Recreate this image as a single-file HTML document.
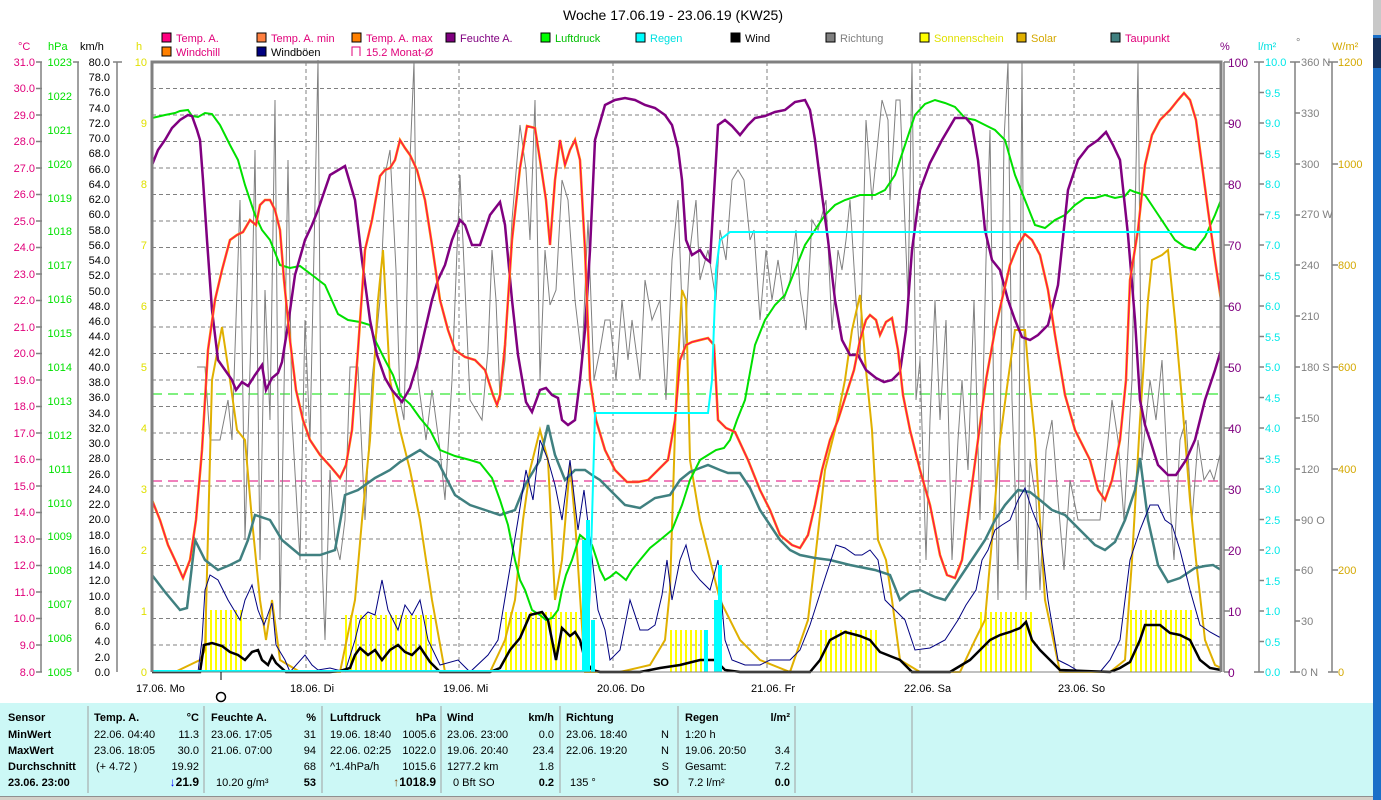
<!DOCTYPE html>
<html><head><meta charset="utf-8"><style>
html,body{margin:0;padding:0;background:#fff;width:1381px;height:800px;overflow:hidden}
svg{display:block;font-family:"Liberation Sans",sans-serif}
</style></head><body>
<svg width="1381" height="800" viewBox="0 0 1381 800" xmlns="http://www.w3.org/2000/svg">
<defs>
<pattern id="sun" width="5" height="10" patternUnits="userSpaceOnUse"><rect x="0" y="0" width="2" height="10" fill="#ffff00"/></pattern>
</defs>
<rect width="1381" height="800" fill="#fff"/>
<!-- right desktop strip -->
<rect x="1373" y="0" width="8" height="800" fill="#1a6fc8"/>
<rect x="1373" y="0" width="8" height="35" fill="#c8c8c8"/>
<rect x="1373" y="38" width="8" height="30" fill="#16305a"/>
<text x="673" y="20" font-size="14" text-anchor="middle" fill="#000">Woche 17.06.19 - 23.06.19 (KW25)</text>
<!-- legend -->
<g font-size="11">
<rect x="162" y="33" width="9" height="9" fill="#ff0080" stroke="#000"/><text x="176" y="42" fill="#e0007a">Temp. A.</text>
<rect x="257" y="33" width="9" height="9" fill="#ff8040" stroke="#000"/><text x="271" y="42" fill="#e0007a">Temp. A. min</text>
<rect x="352" y="33" width="9" height="9" fill="#ff8000" stroke="#000"/><text x="366" y="42" fill="#e0007a">Temp. A. max</text>
<rect x="446" y="33" width="9" height="9" fill="#800080" stroke="#000"/><text x="460" y="42" fill="#800080">Feuchte A.</text>
<rect x="541" y="33" width="9" height="9" fill="#00ff00" stroke="#000"/><text x="555" y="42" fill="#00c000">Luftdruck</text>
<rect x="636" y="33" width="9" height="9" fill="#00ffff" stroke="#000"/><text x="650" y="42" fill="#00e0e0">Regen</text>
<rect x="731" y="33" width="9" height="9" fill="#000" stroke="#000"/><text x="745" y="42" fill="#000">Wind</text>
<rect x="826" y="33" width="9" height="9" fill="#808080" stroke="#000"/><text x="840" y="42" fill="#808080">Richtung</text>
<rect x="920" y="33" width="9" height="9" fill="#ffff00" stroke="#000"/><text x="934" y="42" fill="#e0e000">Sonnenschein</text>
<rect x="1017" y="33" width="9" height="9" fill="#e0b000" stroke="#000"/><text x="1031" y="42" fill="#d4a800">Solar</text>
<rect x="1111" y="33" width="9" height="9" fill="#408080" stroke="#000"/><text x="1125" y="42" fill="#e0007a">Taupunkt</text>
<rect x="162" y="47" width="9" height="9" fill="#ff8000" stroke="#000"/><text x="176" y="56" fill="#e0007a">Windchill</text>
<rect x="257" y="47" width="9" height="9" fill="#000080" stroke="#000"/><text x="271" y="56" fill="#000">Windböen</text>
<path d="M352 56V47h8v9" fill="none" stroke="#e0007a"/><text x="366" y="56" fill="#e0007a">15.2 Monat-Ø</text>
</g>
<!-- axis headers -->
<g font-size="11">
<text x="18" y="50" fill="#e0007a">°C</text><text x="48" y="50" fill="#00e000">hPa</text><text x="80" y="50" fill="#000">km/h</text><text x="136" y="50" fill="#e0e000">h</text>
<text x="1220" y="50" fill="#800080">%</text><text x="1258" y="50" fill="#00e0e0">l/m²</text><text x="1296" y="46" fill="#808080">°</text><text x="1332" y="50" fill="#d4a800">W/m²</text>
</g>
<!-- grid -->
<g stroke="#808080" stroke-dasharray="4,3" stroke-width="1">
<path d="M152 88.5H1221M152 115H1221M152 141.5H1221M152 168H1221M152 194.5H1221M152 221H1221M152 247.5H1221M152 274H1221M152 300.5H1221M152 327H1221M152 353.5H1221M152 380H1221M152 406.5H1221M152 433H1221M152 459.5H1221M152 486H1221M152 512.5H1221M152 539H1221M152 565.5H1221M152 592H1221M152 618.5H1221M152 645H1221"/>
<path d="M306 62V672M459 62V672M613 62V672M767 62V672M920 62V672M1074 62V672"/>
</g>
<path d="M152 394H1221" stroke="#00e000" stroke-dasharray="10,6"/>
<path d="M152 481H1221" stroke="#e0007a" stroke-dasharray="10,6"/>
<!-- sunshine bars -->
<rect x="205" y="610" width="40" height="62" fill="url(#sun)"/>
<rect x="345" y="615" width="90" height="57" fill="url(#sun)"/>
<rect x="505" y="612" width="75" height="60" fill="url(#sun)"/>
<rect x="670" y="630" width="35" height="42" fill="url(#sun)"/>
<rect x="820" y="630" width="60" height="42" fill="url(#sun)"/>
<rect x="980" y="612" width="55" height="60" fill="url(#sun)"/>
<rect x="1130" y="610" width="62" height="62" fill="url(#sun)"/>
<!-- direction gray -->
<polyline fill="none" stroke="#808080" stroke-width="1" points="197,367 205,367 210,440 220,440 228,400 232,440 240,200 245,540 252,300 255,150 260,560 265,290 270,420 275,100 280,620 288,160 292,420 300,560 305,320 310,440 318,60 322,560 325,640 330,470 335,540 340,560 345,520 350,367 358,367 365,520 372,380 380,300 386,170 390,150 396,270 400,400 404,420 410,160 414,62 418,380 426,440 432,390 440,450 445,500 452,380 457,250 460,175 470,400 482,420 488,350 492,250 496,300 500,400 505,360 512,220 520,125 526,170 530,240 535,100 540,380 545,250 550,305 556,290 562,180 568,200 575,300 582,360 588,220 594,380 600,350 605,320 610,320 616,380 622,300 628,360 632,320 640,380 645,280 652,320 660,300 666,400 672,260 678,200 684,360 690,250 696,200 700,280 708,250 716,300 720,230 726,260 732,180 738,170 744,180 750,240 754,230 760,320 766,250 772,300 778,260 784,300 790,280 796,230 800,290 806,330 812,220 818,230 826,200 832,330 838,250 842,270 846,240 850,200 856,300 860,360 866,120 872,200 878,140 882,100 888,120 890,200 896,100 900,100 904,200 908,300 912,62 916,400 920,360 926,560 930,420 935,300 940,420 946,320 952,560 958,440 962,380 968,470 974,300 980,520 986,260 990,130 994,420 998,600 1004,140 1008,62 1012,400 1018,570 1022,62 1026,600 1030,460 1036,500 1040,590 1046,450 1052,420 1058,500 1064,570 1070,480 1078,520 1090,520 1100,520 1108,440 1112,400 1118,440 1124,520 1132,380 1138,62 1142,460 1150,380 1156,420 1162,360 1168,480 1174,560 1180,440 1186,420 1192,520 1198,440 1204,480 1210,470 1214,480 1221,450"/>
<!-- solar -->
<polyline fill="none" stroke="#e0b000" stroke-width="2" points="175,672 200,660 205,650 212,380 222,327 230,380 237,430 245,440 252,520 260,600 266,640 272,600 280,660 300,672 340,672 355,600 362,520 370,440 378,300 383,250 390,380 400,430 410,470 420,520 432,600 445,672 490,672 505,640 515,600 523,520 530,470 540,430 548,460 555,600 562,560 570,465 575,520 585,672 620,672 650,665 665,640 670,590 676,400 682,290 686,300 690,460 700,520 710,560 720,600 740,640 760,660 790,672 808,620 815,560 825,470 835,430 845,380 852,330 860,295 866,370 872,430 878,540 886,560 892,600 900,660 920,672 960,672 975,640 985,620 992,540 1000,440 1008,380 1015,330 1025,330 1030,390 1035,440 1040,520 1045,600 1060,672 1110,672 1125,660 1132,560 1140,420 1148,300 1152,260 1162,255 1168,250 1175,320 1182,400 1190,500 1196,560 1205,640 1215,665 1221,668"/>
<!-- dewpoint -->
<polyline fill="none" stroke="#408080" stroke-width="2.5" points="152,575 165,592 180,610 187,608 195,540 205,560 218,570 230,565 240,560 248,540 255,515 270,520 282,540 300,555 320,555 335,550 345,495 358,490 375,478 390,470 400,462 410,456 420,450 428,456 438,462 455,495 470,505 485,510 500,515 515,510 525,485 540,460 548,425 555,455 565,480 575,470 585,470 592,475 600,480 615,495 625,505 640,508 655,498 670,495 680,480 690,472 700,468 708,465 720,470 728,473 740,473 750,488 760,510 770,525 780,540 790,550 800,555 815,558 830,560 850,565 875,570 890,575 900,600 910,592 920,590 935,597 945,600 955,585 965,570 975,555 985,540 995,520 1005,505 1018,490 1030,492 1040,500 1052,510 1065,515 1080,530 1095,545 1105,550 1115,542 1125,520 1135,490 1140,458 1148,520 1158,565 1168,582 1180,578 1195,568 1205,566 1213,565 1221,570"/>
<!-- pressure -->
<polyline fill="none" stroke="#00e000" stroke-width="2" points="152,118 165,115 175,113 180,111 188,110 192,116 198,117 205,113 212,114 220,125 230,145 238,160 245,185 255,215 262,230 270,240 280,265 290,268 300,266 312,275 325,285 338,314 348,320 360,322 370,325 375,340 385,360 393,375 400,395 410,404 420,418 430,430 440,450 455,456 470,460 480,463 492,478 500,500 508,525 515,560 520,580 525,590 532,610 540,615 546,620 552,618 558,610 562,590 566,575 572,560 580,535 592,545 597,560 600,570 605,580 610,577 616,572 620,575 626,580 632,570 640,560 650,548 660,540 672,530 682,505 690,480 700,460 708,455 716,450 724,448 730,440 737,420 745,400 755,345 765,320 775,305 785,295 795,270 805,245 815,230 825,215 835,205 845,200 860,195 875,195 885,190 895,175 905,145 915,115 925,104 935,100 945,103 955,107 965,118 975,120 985,125 995,130 1005,140 1015,175 1025,200 1035,225 1045,228 1055,220 1065,215 1075,205 1085,198 1095,198 1105,195 1115,198 1125,196 1130,190 1135,192 1145,195 1155,210 1165,225 1175,240 1185,247 1195,250 1205,237 1215,215 1221,200"/>
<!-- humidity -->
<polyline fill="none" stroke="#800080" stroke-width="2.5" points="152,165 158,150 165,140 172,128 180,120 188,115 192,116 197,130 200,140 203,180 207,240 212,310 218,360 225,370 232,380 236,390 242,382 248,386 255,375 262,365 266,390 272,378 278,373 282,362 288,325 295,275 305,240 312,225 318,210 330,175 345,166 355,200 362,260 370,320 377,355 385,378 392,390 402,402 410,388 417,365 425,330 432,300 438,280 445,265 452,240 460,220 465,225 472,245 480,245 490,215 500,202 505,225 512,300 518,355 526,402 532,412 540,390 546,388 552,395 558,398 562,420 568,425 575,420 580,380 585,330 590,250 595,140 605,105 615,100 625,98 635,100 645,105 655,108 665,115 672,125 678,148 682,180 686,240 692,255 700,250 705,258 710,262 718,125 725,120 732,126 740,135 748,125 755,118 765,116 775,112 785,110 795,102 805,100 810,110 815,140 822,195 828,240 835,300 842,340 850,355 858,355 866,370 876,378 884,382 892,380 900,372 906,330 912,250 920,190 930,163 942,140 955,118 966,118 972,125 978,160 985,230 992,260 1000,270 1008,300 1015,320 1022,337 1030,340 1038,335 1048,325 1058,285 1068,190 1078,160 1088,147 1098,140 1106,132 1113,145 1120,160 1128,235 1135,320 1140,400 1145,425 1150,440 1158,465 1168,475 1176,475 1186,460 1195,440 1205,400 1215,370 1221,350"/>
<!-- temperature (orange under, red over) -->
<polyline fill="none" stroke="#ff8000" stroke-width="2.5" points="152,500 160,520 168,545 175,560 183,578 190,560 196,520 202,450 208,350 215,300 222,270 230,240 237,235 243,232 250,220 256,225 260,205 265,200 270,200 275,210 280,230 284,280 290,340 296,390 303,420 310,440 320,455 330,466 340,478 346,465 352,430 358,350 365,250 372,220 380,176 385,170 390,168 395,160 400,140 405,148 410,155 417,170 425,200 432,245 440,300 448,330 455,350 465,357 475,360 485,370 493,395 497,405 500,395 505,345 512,240 520,168 527,126 535,128 540,160 546,200 550,245 555,180 560,140 565,165 570,150 575,140 580,160 585,250 590,380 596,420 605,450 615,470 627,482 638,482 648,480 658,470 668,460 675,420 680,360 686,345 692,342 700,340 708,338 714,345 718,420 726,428 735,432 748,460 760,490 770,510 780,535 792,545 800,548 808,535 815,505 822,470 830,440 838,420 846,395 854,370 860,340 866,320 870,315 876,320 880,335 886,322 892,318 898,350 903,395 910,430 920,470 930,505 940,555 947,575 955,578 962,560 970,500 978,440 986,380 995,330 1003,295 1010,265 1018,245 1025,234 1032,240 1040,255 1048,290 1055,335 1065,395 1075,430 1090,460 1098,490 1105,500 1112,480 1120,440 1126,380 1130,280 1138,230 1145,165 1152,135 1160,120 1170,110 1178,100 1184,93 1190,100 1196,120 1202,165 1208,210 1215,260 1221,300"/>
<polyline fill="none" stroke="#ff0060" stroke-width="1" points="152,500 160,520 168,545 175,560 183,578 190,560 196,520 202,450 208,350 215,300 222,270 230,240 237,235 243,232 250,220 256,225 260,205 265,200 270,200 275,210 280,230 284,280 290,340 296,390 303,420 310,440 320,455 330,466 340,478 346,465 352,430 358,350 365,250 372,220 380,176 385,170 390,168 395,160 400,140 405,148 410,155 417,170 425,200 432,245 440,300 448,330 455,350 465,357 475,360 485,370 493,395 497,405 500,395 505,345 512,240 520,168 527,126 535,128 540,160 546,200 550,245 555,180 560,140 565,165 570,150 575,140 580,160 585,250 590,380 596,420 605,450 615,470 627,482 638,482 648,480 658,470 668,460 675,420 680,360 686,345 692,342 700,340 708,338 714,345 718,420 726,428 735,432 748,460 760,490 770,510 780,535 792,545 800,548 808,535 815,505 822,470 830,440 838,420 846,395 854,370 860,340 866,320 870,315 876,320 880,335 886,322 892,318 898,350 903,395 910,430 920,470 930,505 940,555 947,575 955,578 962,560 970,500 978,440 986,380 995,330 1003,295 1010,265 1018,245 1025,234 1032,240 1040,255 1048,290 1055,335 1065,395 1075,430 1090,460 1098,490 1105,500 1112,480 1120,440 1126,380 1130,280 1138,230 1145,165 1152,135 1160,120 1170,110 1178,100 1184,93 1190,100 1196,120 1202,165 1208,210 1215,260 1221,300"/>
<!-- gusts -->
<polyline fill="none" stroke="#000080" stroke-width="1" points="198,672 202,640 205,590 210,575 218,580 228,600 240,620 245,600 252,585 258,610 264,625 272,603 276,645 285,660 290,672 305,655 312,665 318,670 330,668 345,672 355,640 360,620 368,612 375,615 382,580 388,610 393,620 398,630 405,605 412,615 420,600 428,640 440,665 458,660 470,672 488,655 498,640 508,580 518,520 526,470 533,500 540,440 548,460 555,485 562,520 570,460 578,530 584,490 590,540 598,610 605,630 610,660 620,650 630,600 640,630 648,630 655,625 662,595 667,560 672,600 680,560 686,545 692,570 700,580 710,590 718,560 725,640 732,660 745,665 760,665 770,660 780,660 790,660 800,650 810,625 818,600 826,575 836,545 845,548 855,555 862,555 870,550 878,560 885,600 895,610 905,620 915,650 930,648 945,640 958,620 966,605 976,590 982,560 988,550 995,530 1002,525 1010,520 1018,500 1025,488 1032,510 1040,530 1048,600 1058,660 1068,665 1080,672 1100,672 1110,660 1120,640 1130,560 1140,530 1150,505 1158,505 1165,520 1172,525 1180,550 1190,590 1200,625 1210,632 1221,638"/>
<!-- wind -->
<polyline fill="none" stroke="#000" stroke-width="2.5" points="152,672 200,672 204,645 212,643 222,646 230,652 238,655 245,660 252,652 258,650 262,660 268,665 272,656 276,663 286,672 330,672 340,671 350,668 355,655 360,648 368,655 375,650 382,660 390,650 398,645 405,652 412,655 420,647 430,662 440,672 490,672 500,668 510,650 520,638 530,615 542,612 548,620 552,640 556,660 562,628 570,636 575,632 580,640 585,660 592,670 600,672 640,672 660,668 680,665 700,660 715,660 725,670 740,672 810,672 820,660 830,640 845,632 860,636 870,640 880,652 890,656 900,660 912,672 950,672 960,666 970,660 980,650 990,640 1000,635 1010,632 1020,628 1026,622 1032,640 1040,650 1050,660 1060,670 1110,672 1120,668 1130,662 1140,640 1145,625 1160,625 1170,633 1180,635 1190,640 1200,660 1210,668 1221,670"/>
<!-- rain -->
<polyline fill="none" stroke="#00ffff" stroke-width="2" points="152,671 585,671 590,590 595,413 708,413 712,380 716,270 720,240 730,232 1221,232"/>
<g stroke="#00ffff" stroke-width="4"><path d="M584 672V540M588 672V520M593 672V620M716 672V600M720 672V565M706 672V630"/></g>
<!-- borders -->
<path d="M152 672V62H1221V672" fill="none" stroke="#808080" stroke-width="3"/>
<path d="M152 672H1221" stroke="#808080" stroke-width="1"/>
<!-- axis lines -->
<g stroke="#808080" stroke-width="1.5" fill="none">
<path d="M41 62V672M36 62H42M78 62V672M73 62H79M117 62V672M113 62H122M1224 62V672M1224 62H1230M1259 62V672M1254 62H1264M1295 62V672M1290 62H1300M1332 62V672M1328 62H1338"/>
<path d="M36 88.5H42M36 115H42M36 141.5H42M36 168H42M36 194.5H42M36 221H42M36 247.5H42M36 274H42M36 300.5H42M36 327H42M36 353.5H42M36 380H42M36 406.5H42M36 433H42M36 459.5H42M36 486H42M36 512.5H42M36 539H42M36 565.5H42M36 592H42M36 618.5H42M36 645H42M36 672H42"/>
<path d="M1224 123H1230M1224 184H1230M1224 245H1230M1224 306H1230M1224 367H1230M1224 428H1230M1224 489H1230M1224 550H1230M1224 611H1230M1224 672H1230"/>
<path d="M1259 92.5H1264M1259 123H1264M1259 153.5H1264M1259 184H1264M1259 214.5H1264M1259 245H1264M1259 275.5H1264M1259 306H1264M1259 336.5H1264M1259 367H1264M1259 397.5H1264M1259 428H1264M1259 458.5H1264M1259 489H1264M1259 519.5H1264M1259 550H1264M1259 580.5H1264M1259 611H1264M1259 641.5H1264M1254 672H1264"/>
<path d="M1295 113H1300M1295 164H1300M1295 215H1300M1295 265H1300M1295 316H1300M1295 367H1300M1295 418H1300M1295 469H1300M1295 520H1300M1295 570H1300M1295 621H1300M1290 672H1300"/>
<path d="M1332 164H1338M1332 265H1338M1332 367H1338M1332 469H1338M1332 570H1338M1328 672H1338"/>
</g>
<!-- left labels -->
<g font-size="11" fill="#e0007a" text-anchor="end">
<text x="35" y="66">31.0</text><text x="35" y="92">30.0</text><text x="35" y="119">29.0</text><text x="35" y="145">28.0</text><text x="35" y="172">27.0</text><text x="35" y="198">26.0</text><text x="35" y="225">25.0</text><text x="35" y="251">24.0</text><text x="35" y="278">23.0</text><text x="35" y="304">22.0</text><text x="35" y="331">21.0</text><text x="35" y="357">20.0</text><text x="35" y="384">19.0</text><text x="35" y="410">18.0</text><text x="35" y="437">17.0</text><text x="35" y="463">16.0</text><text x="35" y="490">15.0</text><text x="35" y="516">14.0</text><text x="35" y="543">13.0</text><text x="35" y="569">12.0</text><text x="35" y="596">11.0</text><text x="35" y="622">10.0</text><text x="35" y="649">9.0</text><text x="35" y="676">8.0</text>
</g>
<g font-size="11" fill="#00e000" text-anchor="end">
<text x="72" y="66">1023</text><text x="72" y="100">1022</text><text x="72" y="134">1021</text><text x="72" y="168">1020</text><text x="72" y="202">1019</text><text x="72" y="235">1018</text><text x="72" y="269">1017</text><text x="72" y="303">1016</text><text x="72" y="337">1015</text><text x="72" y="371">1014</text><text x="72" y="405">1013</text><text x="72" y="439">1012</text><text x="72" y="473">1011</text><text x="72" y="507">1010</text><text x="72" y="540">1009</text><text x="72" y="574">1008</text><text x="72" y="608">1007</text><text x="72" y="642">1006</text><text x="72" y="676">1005</text>
</g>
<g font-size="11" fill="#000" text-anchor="end">
<text x="110" y="66">80.0</text><text x="110" y="81">78.0</text><text x="110" y="96">76.0</text><text x="110" y="112">74.0</text><text x="110" y="127">72.0</text><text x="110" y="142">70.0</text><text x="110" y="157">68.0</text><text x="110" y="173">66.0</text><text x="110" y="188">64.0</text><text x="110" y="203">62.0</text><text x="110" y="218">60.0</text><text x="110" y="234">58.0</text><text x="110" y="249">56.0</text><text x="110" y="264">54.0</text><text x="110" y="279">52.0</text><text x="110" y="295">50.0</text><text x="110" y="310">48.0</text><text x="110" y="325">46.0</text><text x="110" y="340">44.0</text><text x="110" y="356">42.0</text><text x="110" y="371">40.0</text><text x="110" y="386">38.0</text><text x="110" y="401">36.0</text><text x="110" y="417">34.0</text><text x="110" y="432">32.0</text><text x="110" y="447">30.0</text><text x="110" y="462">28.0</text><text x="110" y="478">26.0</text><text x="110" y="493">24.0</text><text x="110" y="508">22.0</text><text x="110" y="523">20.0</text><text x="110" y="539">18.0</text><text x="110" y="554">16.0</text><text x="110" y="569">14.0</text><text x="110" y="584">12.0</text><text x="110" y="600">10.0</text><text x="110" y="615">8.0</text><text x="110" y="630">6.0</text><text x="110" y="645">4.0</text><text x="110" y="661">2.0</text><text x="110" y="676">0.0</text>
</g>
<g font-size="11" fill="#e0e000" text-anchor="end">
<text x="147" y="66">10</text><text x="147" y="127">9</text><text x="147" y="188">8</text><text x="147" y="249">7</text><text x="147" y="310">6</text><text x="147" y="371">5</text><text x="147" y="432">4</text><text x="147" y="493">3</text><text x="147" y="554">2</text><text x="147" y="615">1</text><text x="147" y="676">0</text>
</g>
<!-- right labels -->
<g font-size="12" fill="#800080">
<text x="1228" y="67">100</text><text x="1228" y="128">90</text><text x="1228" y="189">80</text><text x="1228" y="250">70</text><text x="1228" y="311">60</text><text x="1228" y="372">50</text><text x="1228" y="433">40</text><text x="1228" y="494">30</text><text x="1228" y="555">20</text><text x="1228" y="616">10</text><text x="1228" y="677">0</text>
</g>
<g font-size="11" fill="#00e8e8">
<text x="1265" y="66">10.0</text><text x="1265" y="97">9.5</text><text x="1265" y="127">9.0</text><text x="1265" y="158">8.5</text><text x="1265" y="188">8.0</text><text x="1265" y="219">7.5</text><text x="1265" y="249">7.0</text><text x="1265" y="280">6.5</text><text x="1265" y="310">6.0</text><text x="1265" y="341">5.5</text><text x="1265" y="371">5.0</text><text x="1265" y="402">4.5</text><text x="1265" y="432">4.0</text><text x="1265" y="463">3.5</text><text x="1265" y="493">3.0</text><text x="1265" y="524">2.5</text><text x="1265" y="554">2.0</text><text x="1265" y="585">1.5</text><text x="1265" y="615">1.0</text><text x="1265" y="646">0.5</text><text x="1265" y="676">0.0</text>
</g>
<g font-size="11" fill="#808080">
<text x="1301" y="66">360 N</text><text x="1301" y="117">330</text><text x="1301" y="168">300</text><text x="1301" y="218">270 W</text><text x="1301" y="269">240</text><text x="1301" y="320">210</text><text x="1301" y="371">180 S</text><text x="1301" y="422">150</text><text x="1301" y="473">120</text><text x="1301" y="524">90  O</text><text x="1301" y="574">60</text><text x="1301" y="625">30</text><text x="1301" y="676">0   N</text>
</g>
<g font-size="11" fill="#d4a800">
<text x="1338" y="66">1200</text><text x="1338" y="168">1000</text><text x="1338" y="269">800</text><text x="1338" y="371">600</text><text x="1338" y="473">400</text><text x="1338" y="574">200</text><text x="1338" y="676">0</text>
</g>
<!-- x labels -->
<g font-size="11" fill="#000">
<path d="M221 672V680" stroke="#000"/>
<text x="136" y="692">17.06.  Mo</text><text x="290" y="692">18.06.  Di</text><text x="443" y="692">19.06.  Mi</text><text x="597" y="692">20.06.  Do</text><text x="751" y="692">21.06.  Fr</text><text x="904" y="692">22.06.  Sa</text><text x="1058" y="692">23.06.  So</text>
</g>
<circle cx="221" cy="697" r="4.5" fill="none" stroke="#000" stroke-width="1.5"/>
<!-- table -->
<rect x="0" y="703" width="1373" height="93" fill="#ccf8f6"/>
<rect x="0" y="796" width="1373" height="4" fill="#d4d0c8"/>
<path d="M0 796.5H1373" stroke="#909090"/>
<g stroke="#a0a0a0"><path d="M88 706V793M204 706V793M322 706V793M441 706V793M560 706V793M678 706V793M795 706V793M912 706V793"/></g>
<g font-size="11" fill="#000">
<g font-weight="bold">
<text x="8" y="721">Sensor</text><text x="8" y="738">MinWert</text><text x="8" y="754">MaxWert</text><text x="8" y="770">Durchschnitt</text><text x="8" y="786">23.06. 23:00</text>
<text x="94" y="721">Temp. A.</text><text x="199" y="721" text-anchor="end">°C</text>
<text x="211" y="721">Feuchte A.</text><text x="316" y="721" text-anchor="end">%</text>
<text x="330" y="721">Luftdruck</text><text x="436" y="721" text-anchor="end">hPa</text>
<text x="447" y="721">Wind</text><text x="554" y="721" text-anchor="end">km/h</text>
<text x="566" y="721">Richtung</text>
<text x="685" y="721">Regen</text><text x="790" y="721" text-anchor="end">l/m²</text>
<text x="199" y="786" text-anchor="end" font-size="12"><tspan fill="#0000ff">↓</tspan>21.9</text>
<text x="316" y="786" text-anchor="end">53</text>
<text x="436" y="786" text-anchor="end" font-size="12"><tspan fill="#804000">↑</tspan>1018.9</text>
<text x="554" y="786" text-anchor="end">0.2</text>
<text x="669" y="786" text-anchor="end">SO</text>
<text x="790" y="786" text-anchor="end">0.0</text>
</g>
<text x="94" y="738">22.06.  04:40</text><text x="199" y="738" text-anchor="end">11.3</text>
<text x="94" y="754">23.06.  18:05</text><text x="199" y="754" text-anchor="end">30.0</text>
<text x="96" y="770">(+ 4.72 )</text><text x="199" y="770" text-anchor="end">19.92</text>
<text x="211" y="738">23.06.  17:05</text><text x="316" y="738" text-anchor="end">31</text>
<text x="211" y="754">21.06.  07:00</text><text x="316" y="754" text-anchor="end">94</text>
<text x="316" y="770" text-anchor="end">68</text>
<text x="216" y="786">10.20 g/m³</text>
<text x="330" y="738">19.06.  18:40</text><text x="436" y="738" text-anchor="end">1005.6</text>
<text x="330" y="754">22.06.  02:25</text><text x="436" y="754" text-anchor="end">1022.0</text>
<text x="330" y="770">^1.4hPa/h</text><text x="436" y="770" text-anchor="end">1015.6</text>
<text x="447" y="738">23.06.  23:00</text><text x="554" y="738" text-anchor="end">0.0</text>
<text x="447" y="754">19.06.  20:40</text><text x="554" y="754" text-anchor="end">23.4</text>
<text x="447" y="770">1277.2 km</text><text x="554" y="770" text-anchor="end">1.8</text>
<text x="453" y="786">0 Bft SO</text>
<text x="566" y="738">23.06.  18:40</text><text x="669" y="738" text-anchor="end">N</text>
<text x="566" y="754">22.06.  19:20</text><text x="669" y="754" text-anchor="end">N</text>
<text x="669" y="770" text-anchor="end">S</text>
<text x="570" y="786">135 °</text>
<text x="685" y="738">1:20 h</text>
<text x="685" y="754">19.06.  20:50</text><text x="790" y="754" text-anchor="end">3.4</text>
<text x="685" y="770">Gesamt:</text><text x="790" y="770" text-anchor="end">7.2</text>
<text x="688" y="786">7.2 l/m²</text>
</g>
</svg>
</body></html>
